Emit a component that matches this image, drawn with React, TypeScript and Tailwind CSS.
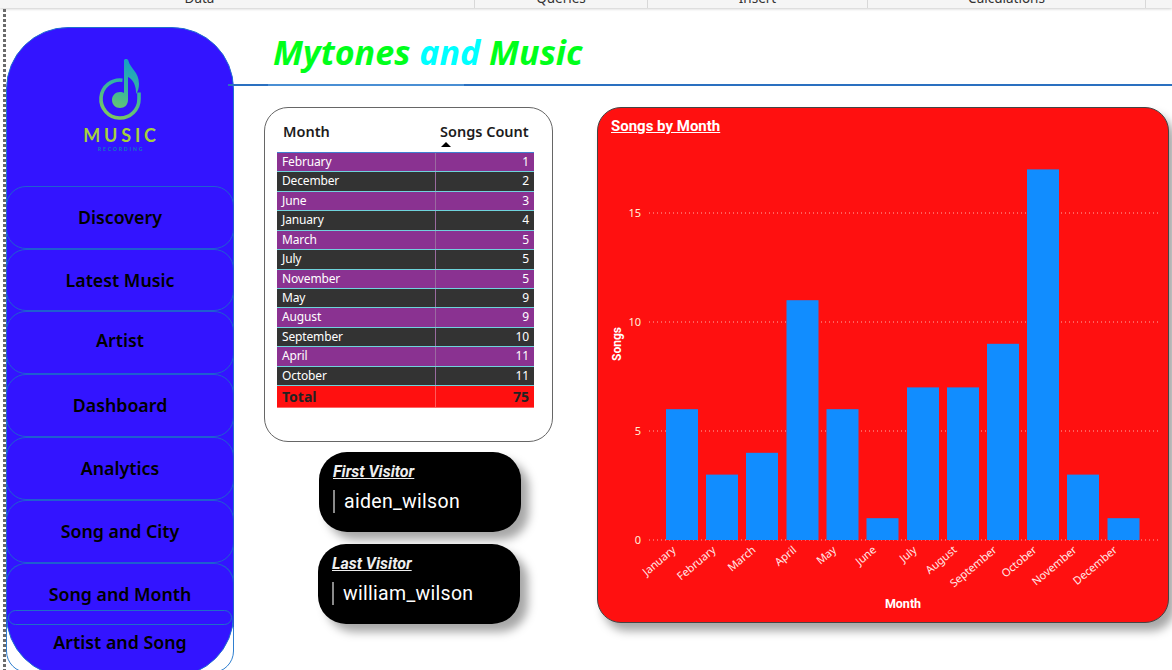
import React from "react";

const navItems = [
  { t: "Discovery", h: "h-[63px]" },
  { t: "Latest Music", h: "h-[62px]" },
  { t: "Artist", h: "h-[63px] pb-[4px]" },
  { t: "Dashboard", h: "h-[63px]" },
  { t: "Analytics", h: "h-[63px]" },
  { t: "Song and City", h: "h-[63px]" },
];

const rows: [string, number][] = [
  ["February", 1], ["December", 2], ["June", 3], ["January", 4], ["March", 5], ["July", 5],
  ["November", 5], ["May", 9], ["August", 9], ["September", 10], ["April", 11], ["October", 11],
];

const bars: [string, number, number][] = [
  ["January", 666, 6], ["February", 706, 3], ["March", 746, 4], ["April", 786.5, 11], ["May", 826.5, 6], ["June", 866.5, 1],
  ["July", 907, 7], ["August", 947, 7], ["September", 987, 9], ["October", 1027, 17], ["November", 1067, 3], ["December", 1107.5, 1],
];

function Logo() {
  return (
    <div className="flex flex-col items-center">
      <svg width="44" height="66" viewBox="0 0 44 66" className="block">
        <defs>
          <linearGradient id="noteG" gradientUnits="userSpaceOnUse" x1="34" y1="2" x2="12" y2="62">
            <stop offset="0" stopColor="#149fc8" />
            <stop offset="0.5" stopColor="#3bb79a" />
            <stop offset="1" stopColor="#86ca58" />
          </linearGradient>
        </defs>
        <path d="M26 2.5 C26.5 0.5 30 0.5 30.5 3 C32 10 41 14 41 26 C41 30 40 33 38 36 C38.5 28 35 21 30 19 L30 42 C30 47 26.5 50 22 50 C17.5 50 14 46.5 14 42 C14 37.5 17.5 34 22 34 C23.5 34 25 34.4 26 35 Z" fill="url(#noteG)" />
        <path d="M24.5 22.2 A19 19 0 1 0 41 41 L41 34.5" fill="none" stroke="url(#noteG)" strokeWidth="3.6" />
      </svg>
      <div className="mt-[3px] pl-[3px] text-[18px] font-bold leading-[17px] tracking-[3.8px] text-[#a5d13c] font-['Lato',sans-serif]">MUSIC</div>
      <div className="mt-[2px] pl-[2px] text-[5px] font-bold leading-[7px] tracking-[1.9px] text-[#0f7fc0] font-['Lato',sans-serif]">RECORDING</div>
    </div>
  );
}

function Sidebar() {
  return (
    <div className="relative h-[643px] w-[228px] shrink-0 ml-[6px] mt-[19px] overflow-hidden">
      <div className="absolute inset-x-0 bottom-[-3px] top-[500px] rounded-[22px] border border-[#2f7fd0] bg-white" />
      <div className="absolute inset-x-0 top-0 bottom-[-7px] rounded-[62px] border border-[#1f6fd0] bg-[#3314ff] flex flex-col">
        <div className="h-[158px] shrink-0 pt-[30px] flex justify-center"><Logo /></div>
        {navItems.map((n) => (
          <div key={n.t} className={`${n.h} shrink-0 rounded-[20px] border border-[#1f5fd0] flex items-center justify-center text-[17.8px] font-semibold text-black font-['Noto_Sans',sans-serif] -mx-px`}>
            {n.t}
          </div>
        ))}
        <div className="relative shrink-0 h-[64px] pb-[2px] -mx-px rounded-t-[20px] border border-[#1f5fd0] border-b-0 flex items-center justify-center text-[17.8px] font-semibold text-black font-['Noto_Sans',sans-serif]">
          Song and Month
          <div className="absolute left-[1px] right-[1px] top-[46px] h-[15px] rounded-[14px] border border-[#1f6fc8]" />
        </div>
        <div className="mt-[3px] text-center text-[17.8px] font-semibold leading-[24px] text-black font-['Noto_Sans',sans-serif]">Artist and Song</div>
      </div>
    </div>
  );
}

function SongTable() {
  return (
    <div className="h-[335px] w-[289px] rounded-[24px] border border-[#666666] bg-white pl-[12px] pt-[13px]">
      <div className="flex h-[31px] text-[14.5px] font-semibold text-[#1c1c1c] font-['Noto_Sans',sans-serif] leading-[20px]">
        <div className="w-[159px] pl-[6px]">Month</div>
        <div className="flex-1 pl-[4px] relative whitespace-nowrap">
          Songs Count
          <div className="absolute left-[5px] top-[21px] h-0 w-0 border-x-[5px] border-b-[5px] border-x-transparent border-b-black" />
        </div>
      </div>
      <div className="border-t border-[#3f7fd0] w-[257px]">
        {rows.map(([m, c], i) => (
          <div key={m} className={`flex h-[19.43px] border-b border-[#6fd3dc] text-[12px] tracking-[-0.15px] leading-[18px] text-white font-['Noto_Sans',sans-serif] ${i % 2 === 0 ? "bg-[#8a3291]" : "bg-[#333333]"}`}>
            <div className="w-[159px] pl-[5px] border-r border-[#9a6aa0]">{m}</div>
            <div className="flex-1 text-right pr-[5px]">{c}</div>
          </div>
        ))}
        <div className="flex h-[22px] bg-[#ff1010] text-[14px] font-bold leading-[21px] text-[#222222] font-['Noto_Sans',sans-serif] border-b border-[#ff6666]">
          <div className="w-[159px] pl-[5px] border-r border-[#ff5a5a]">Total</div>
          <div className="flex-1 text-right pr-[5px]">75</div>
        </div>
      </div>
    </div>
  );
}

function Visitor({ label, name, cls }: { label: string; name: string; cls: string }) {
  return (
    <div className={`h-[80px] w-[202px] rounded-[28px] bg-black pl-[14px] pt-[10px] text-white font-['Roboto',sans-serif] shadow-[8px_8px_10px_rgba(0,0,0,0.35)] ${cls}`}>
      <div className="text-[16px] font-bold italic underline leading-[20px] text-[#eeeeee]">{label}</div>
      <div className="mt-[8px] flex h-[23px] items-center border-l-2 border-[#8a8a8a] pl-[9px] text-[19.5px] tracking-[0.3px] leading-[23px]">{name}</div>
    </div>
  );
}

function Chart() {
  return (
    <div className="relative h-[516px] w-[572px] shrink-0 rounded-[24px] border border-[#444444] bg-[#ff1010] shadow-[6px_8px_10px_rgba(0,0,0,0.35)]">
      <div className="pl-[13px] pt-[8px] text-[15px] font-bold underline leading-[20px] text-white font-['Roboto',sans-serif]">Songs by Month</div>
      <svg width="572" height="516" viewBox="597 107 572 516" className="absolute left-[-1px] top-[-1px]">
        {[[540, "0"], [431, "5"], [322, "10"], [213, "15"]].map(([y, l]) => (
          <g key={l as string}>
            <line x1="649" x2="1158" y1={y as number} y2={y as number} stroke="#ffb0a8" strokeWidth="1" strokeDasharray="1 3" />
            <text x="641" y={(y as number) + 4} textAnchor="end" fontSize="11" fill="#fff0d8" fontFamily="Noto Sans, sans-serif">{l}</text>
          </g>
        ))}
        {bars.map(([m, x, v]) => (
          <g key={m}>
            <rect x={x} y={540 - v * 21.8} width="32" height={v * 21.8} fill="#118dff" />
            <text transform={`translate(${x + 8} 548) rotate(-40)`} textAnchor="end" x="0" y="4" fontSize="11" fill="#ffe8e8" fontFamily="Noto Sans, sans-serif">{m}</text>
          </g>
        ))}
        <text x="903" y="608" textAnchor="middle" fontSize="12.5" fontWeight="700" fill="#fff" fontFamily="Roboto, sans-serif">Month</text>
        <text transform="translate(621 344) rotate(-90)" textAnchor="middle" fontSize="12" fontWeight="700" fill="#fff" fontFamily="Roboto, sans-serif">Songs</text>
      </svg>
    </div>
  );
}

export default function App() {
  return (
    <div className="relative h-[670px] w-[1172px] overflow-hidden bg-white">
      <div className="flex h-[8px] overflow-hidden bg-[#f5f5f5] shadow-[0_1px_3px_rgba(0,0,0,0.2)] text-[13.5px] leading-[4px] text-[#333333] font-['Noto_Sans',sans-serif] text-center">
        <div className="w-[475px] border-r border-[#d8d8d8] pr-[75px]"><span className="relative -top-[4px]">Data</span></div>
        <div className="w-[173px] border-r border-[#d8d8d8]"><span className="relative -top-[4px]">Queries</span></div>
        <div className="w-[220px] border-r border-[#d8d8d8]"><span className="relative -top-[4px]">Insert</span></div>
        <div className="w-[278px] border-r border-[#d8d8d8]"><span className="relative -top-[4px]">Calculations</span></div>
      </div>
      <div className="absolute left-[3px] top-[9px] bottom-0 w-[3px] bg-[repeating-linear-gradient(to_bottom,#6b6b6b_0_3px,transparent_3px_5px)]" />
      <div className="flex">
        <Sidebar />
        <div className="flex-1 min-w-0 relative">
          <div className="h-[76px] -ml-[6px] pl-[45px] pt-[21px]">
            <div className="text-[34.1px] font-bold italic leading-[46px] text-[#00ff1a] font-['Noto_Sans',sans-serif] whitespace-nowrap">
              Mytones <span className="text-[#00ffff]">and</span> Music
            </div>
          </div>
          <div className="flex h-[2px] -ml-[6px]">
            <div className="w-[40px] bg-[#2a70c0]" />
            <div className="w-[196px] bg-[#4a8fd4]" />
            <div className="flex-1 bg-[#2a70c0]" />
          </div>
          <div className="flex pt-[21px] pl-[30px]">
            <div className="w-[333px] shrink-0">
              <SongTable />
              <Visitor label="First Visitor" name="aiden_wilson" cls="ml-[55px] mt-[10px]" />
              <Visitor label="Last Visitor" name="william_wilson" cls="ml-[54px] mt-[12px]" />
            </div>
            <Chart />
          </div>
        </div>
      </div>
    </div>
  );
}
